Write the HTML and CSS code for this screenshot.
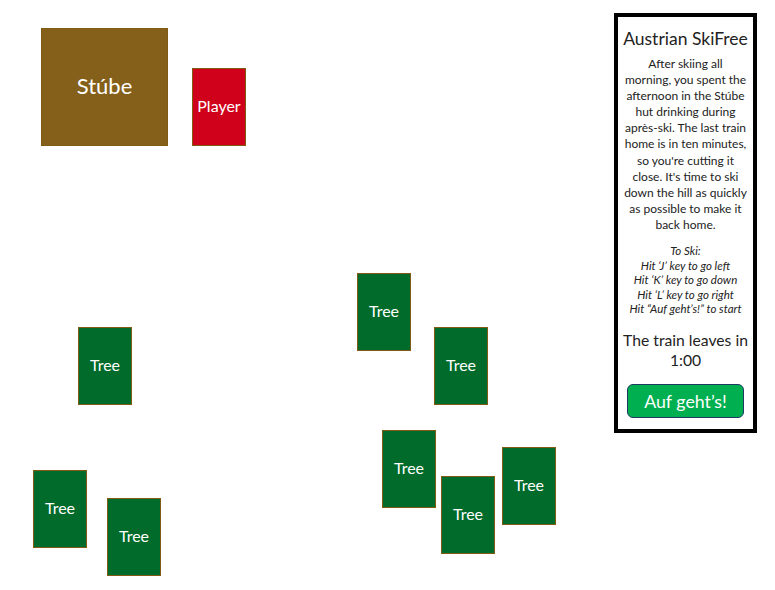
FILE: index.html
```html
<!DOCTYPE html>
<html lang="en">
<head>
    <meta charset="UTF-8">
    <meta name="viewport" content="width=device-width, initial-scale=1.0">
    <title>Austrian SkiFree</title>
    <link rel="stylesheet" href="styles.css">
</head>
<body>
    <div class="screen">
        <div class="slope">
            <div class="stube">Stúbe</div>
            <div class="player">Player</div>
            <div class="tree" style="left:357px;top:273px">Tree</div>
            <div class="tree" style="left:434px;top:327px">Tree</div>
            <div class="tree" style="left:78px;top:327px">Tree</div>
            <div class="tree" style="left:33px;top:470px">Tree</div>
            <div class="tree" style="left:107px;top:498px">Tree</div>
            <div class="tree" style="left:382px;top:430px">Tree</div>
            <div class="tree" style="left:441px;top:476px">Tree</div>
            <div class="tree" style="left:502px;top:447px">Tree</div>
        </div>
        <div class="panel">
            <h1 class="title">Austrian SkiFree</h1>
            <p class="story">After skiing all<br>morning, you spent the<br>afternoon in the Stúbe<br>hut drinking during<br>après-ski. The last train<br>home is in ten minutes,<br>so you're cutting it<br>close. It's time to ski<br>down the hill as quickly<br>as possible to make it<br>back home.</p>
            <p class="howto">To Ski:<br>Hit ‘J’ key to go left<br>Hit ‘K’ key to go down<br>Hit ‘L’ key to go right<br>Hit “Auf geht’s!” to start</p>
            <p class="timer">The train leaves in<br>1:00</p>
            <button class="start">Auf geht’s!</button>
        </div>
    </div>
</body>
</html>
```

FILE: styles.css
```css
*{
   margin: 0;
   padding: 0;
   box-sizing: border-box;
}
body{
   background-color: white;
   font-family: Lato, "Open Sans", sans-serif;
   color: #222;
}
.screen{
   display: flex;
   height: 590px;
}
.slope{
   position: relative;
   flex: 1;
}
.stube,.player,.tree{
   position: absolute;
   display: flex;
   justify-content: center;
   align-items: center;
   padding-bottom: 3px;
   color: white;
   border: 1px solid #7f5b14;
}
.stube{
   left: 41px;
   top: 28px;
   width: 127px;
   height: 118px;
   background-color: #84601b;
   font-size: 22px;
}
.player{
   left: 192px;
   top: 68px;
   width: 54px;
   height: 78px;
   background-color: #d0021b;
   font-size: 16px;
}
.tree{
   width: 54px;
   height: 78px;
   background-color: #006b2a;
   font-size: 16px;
}
.panel{
   width: 143px;
   height: 420px;
   margin: 13px 18px 0 0;
   border: 4px solid black;
   padding-top: 11px;
   display: flex;
   flex-direction: column;
   align-items: center;
   text-align: center;
}
.title{
   font-size: 17.5px;
   font-weight: normal;
   line-height: 22px;
   white-space: nowrap;
}
.story{
   margin-top: 6px;
   font-size: 12px;
   line-height: 16.1px;
   white-space: nowrap;
}
.howto{
   margin-top: 11px;
   font-size: 11.5px;
   font-style: italic;
   line-height: 14.5px;
   white-space: nowrap;
}
.timer{
   margin-top: 13px;
   font-size: 15.7px;
   line-height: 20.5px;
   white-space: nowrap;
}
.start{
   margin-top: 13px;
   width: 117px;
   height: 34px;
   border: 1px solid #1f3864;
   border-radius: 6px;
   background-color: #00b050;
   color: white;
   font-family: Lato, "Open Sans", sans-serif;
   font-size: 17.8px;
}
```
